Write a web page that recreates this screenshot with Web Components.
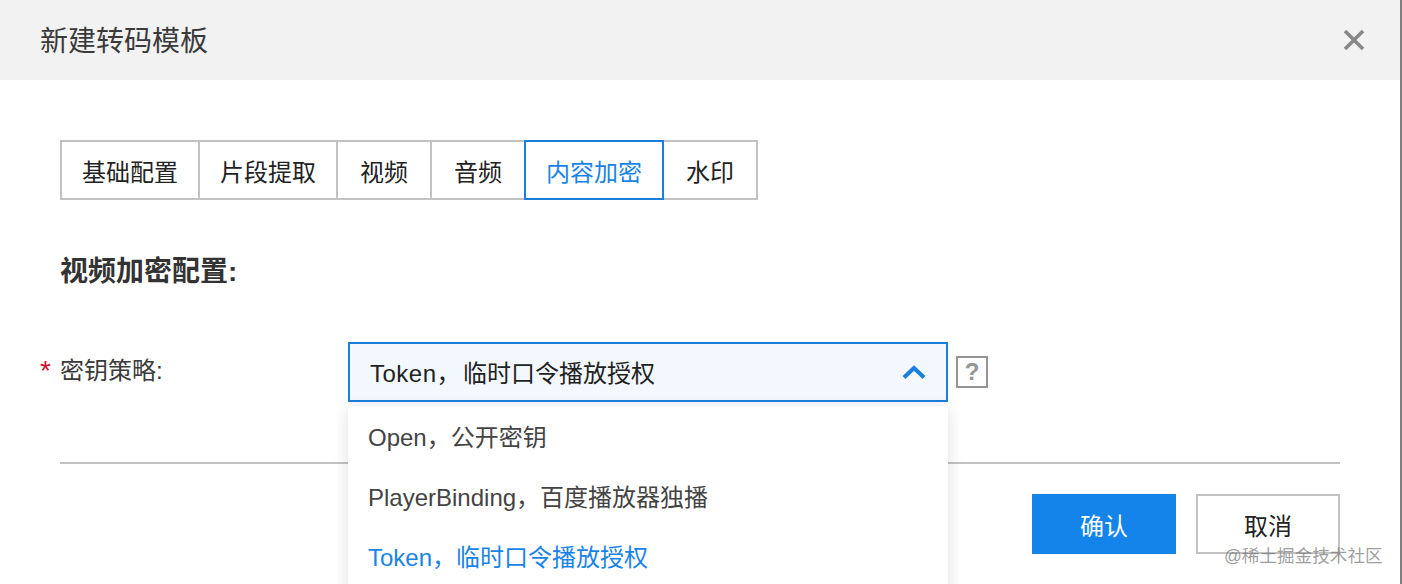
<!DOCTYPE html>
<html lang="zh">
<head>
<meta charset="utf-8">
<title>新建转码模板</title>
<style>
  html, body { margin: 0; height: 584px; overflow: hidden; background: #7f7f7f; }
  body { font-family: "Liberation Sans", "Noto Sans CJK SC", sans-serif; color: #333; }
</style>
</head>
<body>
<transcode-dialog heading="新建转码模板">
  <tab-bar>
    <tab-item>基础配置</tab-item>
    <tab-item>片段提取</tab-item>
    <tab-item>视频</tab-item>
    <tab-item>音频</tab-item>
    <tab-item active>内容加密</tab-item>
    <tab-item>水印</tab-item>
  </tab-bar>
  <section-title>视频加密配置:</section-title>
  <key-field label="密钥策略:" lead="Token，" value="临时口令播放授权">
    <drop-option>Open，公开密钥</drop-option>
    <drop-option>PlayerBinding，百度播放器独播</drop-option>
    <drop-option selected>Token，临时口令播放授权</drop-option>
  </key-field>
  <dialog-actions slot="footer">
    <action-button primary>确认</action-button>
    <action-button>取消</action-button>
  </dialog-actions>
</transcode-dialog>
<site-mark>@稀土掘金技术社区</site-mark>

<script>
// small helper so every element below reads the same
class ShadowElement extends HTMLElement {
  constructor() {
    super();
    this.attachShadow({ mode: 'open' });
  }
  connectedCallback() {
    this.shadowRoot.innerHTML = `<style>${this.constructor.styles}</style>${this.markup()}`;
  }
  markup() {
    return '<slot></slot>';
  }
}

class TranscodeDialog extends ShadowElement {
  static styles = `
    :host { display: block; width: 1400px; height: 584px; background: #fff; overflow: hidden; }
    header {
      display: flex; align-items: center; justify-content: space-between;
      height: 80px; padding: 0 34px 0 40px; background: #f2f2f2;
      font-size: 28px; color: #3a3a3a;
    }
    header span { margin-top: -2px; }
    svg { display: block; width: 24px; height: 24px; }
    main { padding: 60px 60px 0; }
  `;
  markup() {
    return `
      <header>
        <span>${this.getAttribute('heading')}</span>
        <svg viewBox="0 0 24 24" aria-label="关闭"><path d="M3 3l18 18M21 3L3 21" stroke="#888" stroke-width="3.600" fill="none"/></svg>
      </header>
      <main><slot></slot><slot name="footer"></slot></main>`;
  }
}

class TabBar extends ShadowElement {
  static styles = `:host { display: flex; height: 60px; }`;
}

class TabItem extends ShadowElement {
  static styles = `
    :host {
      display: flex; align-items: center; justify-content: center; box-sizing: border-box;
      min-width: 96px; height: 60px; padding: 0 20px; margin-right: -2px;
      border: 2px solid #c2c2c2; background: #fff; font-size: 24px; color: #222;
    }
    :host([active]) { position: relative; z-index: 1; border-color: #1a7fdc; color: #1a84e6; }
  `;
}

class SectionTitle extends ShadowElement {
  static styles = `
    :host { display: block; margin-top: 50px; height: 44px; font-size: 28px; line-height: 44px; font-weight: 700; color: #333; }
  `;
}

class KeyField extends ShadowElement {
  static styles = `
    :host { display: flex; margin: 48px 0 0 -20px; height: 60px; font-size: 24px; }
    .star { width: 20px; color: #d0112b; font-size: 28px; line-height: 58px; }
    .label { width: 288px; line-height: 58px; color: #3a3a3a; }
    .select-wrap { position: relative; width: 600px; }
    .select {
      display: flex; align-items: center; justify-content: space-between; box-sizing: border-box;
      height: 60px; padding: 0 20px 2px; border: 2px solid #1a7fdc; background: #f3f8fe; color: #222;
    }
    .select b { font-weight: 400; letter-spacing: .5px; margin-right: 2px; }
    .select svg { display: block; width: 24px; height: 16px; margin-top: 2px; }
    .menu {
      position: absolute; top: 64px; left: 0; right: 0; z-index: 2; height: 240px;
      background: #fff; box-shadow: 0 2px 14px rgba(0, 0, 0, .13);
    }
    .help {
      display: flex; align-items: center; justify-content: center; box-sizing: border-box;
      width: 32px; height: 32px; margin: 14px 0 0 8px;
      border: 2px solid #959595; color: #959595; font-size: 24px; font-weight: 700;
    }
  `;
  markup() {
    return `
      <span class="star">*</span>
      <span class="label">${this.getAttribute('label')}</span>
      <div class="select-wrap">
        <div class="select">
          <span><b>${this.getAttribute('lead')}</b>${this.getAttribute('value')}</span>
          <svg viewBox="0 0 24 16"><path d="M2 13.500L12 4l10 9.500" stroke="#1a7fdc" stroke-width="4" fill="none"/></svg>
        </div>
        <div class="menu"><slot></slot></div>
      </div>
      <span class="help">?</span>`;
  }
}

class DropOption extends ShadowElement {
  static styles = `
    :host { display: flex; align-items: center; box-sizing: border-box; height: 60px; padding: 0 20px 2px; font-size: 24px; color: #444; }
    :host([selected]) { color: #1a84e6; }
  `;
}

class DialogActions extends ShadowElement {
  static styles = `
    :host { display: flex; justify-content: flex-end; gap: 20px; margin-top: 60px; padding-top: 30px; border-top: 2px solid #c2c2c2; }
  `;
}

class ActionButton extends ShadowElement {
  static styles = `
    :host {
      display: flex; align-items: center; justify-content: center; box-sizing: border-box;
      width: 144px; height: 60px; border: 2px solid #c2c2c2; background: #fff; font-size: 24px; color: #222;
    }
    :host([primary]) { border-color: #1484ea; background: #1484ea; color: #fff; }
  `;
}

class SiteMark extends ShadowElement {
  static styles = `
    :host { position: absolute; left: 1224px; top: 543px; z-index: 3; font-size: 17.600px; line-height: 26px; color: rgba(120, 120, 120, .72); white-space: nowrap; }
  `;
}

customElements.define('transcode-dialog', TranscodeDialog);
customElements.define('tab-bar', TabBar);
customElements.define('tab-item', TabItem);
customElements.define('section-title', SectionTitle);
customElements.define('key-field', KeyField);
customElements.define('drop-option', DropOption);
customElements.define('dialog-actions', DialogActions);
customElements.define('action-button', ActionButton);
customElements.define('site-mark', SiteMark);
</script>
</body>
</html>
